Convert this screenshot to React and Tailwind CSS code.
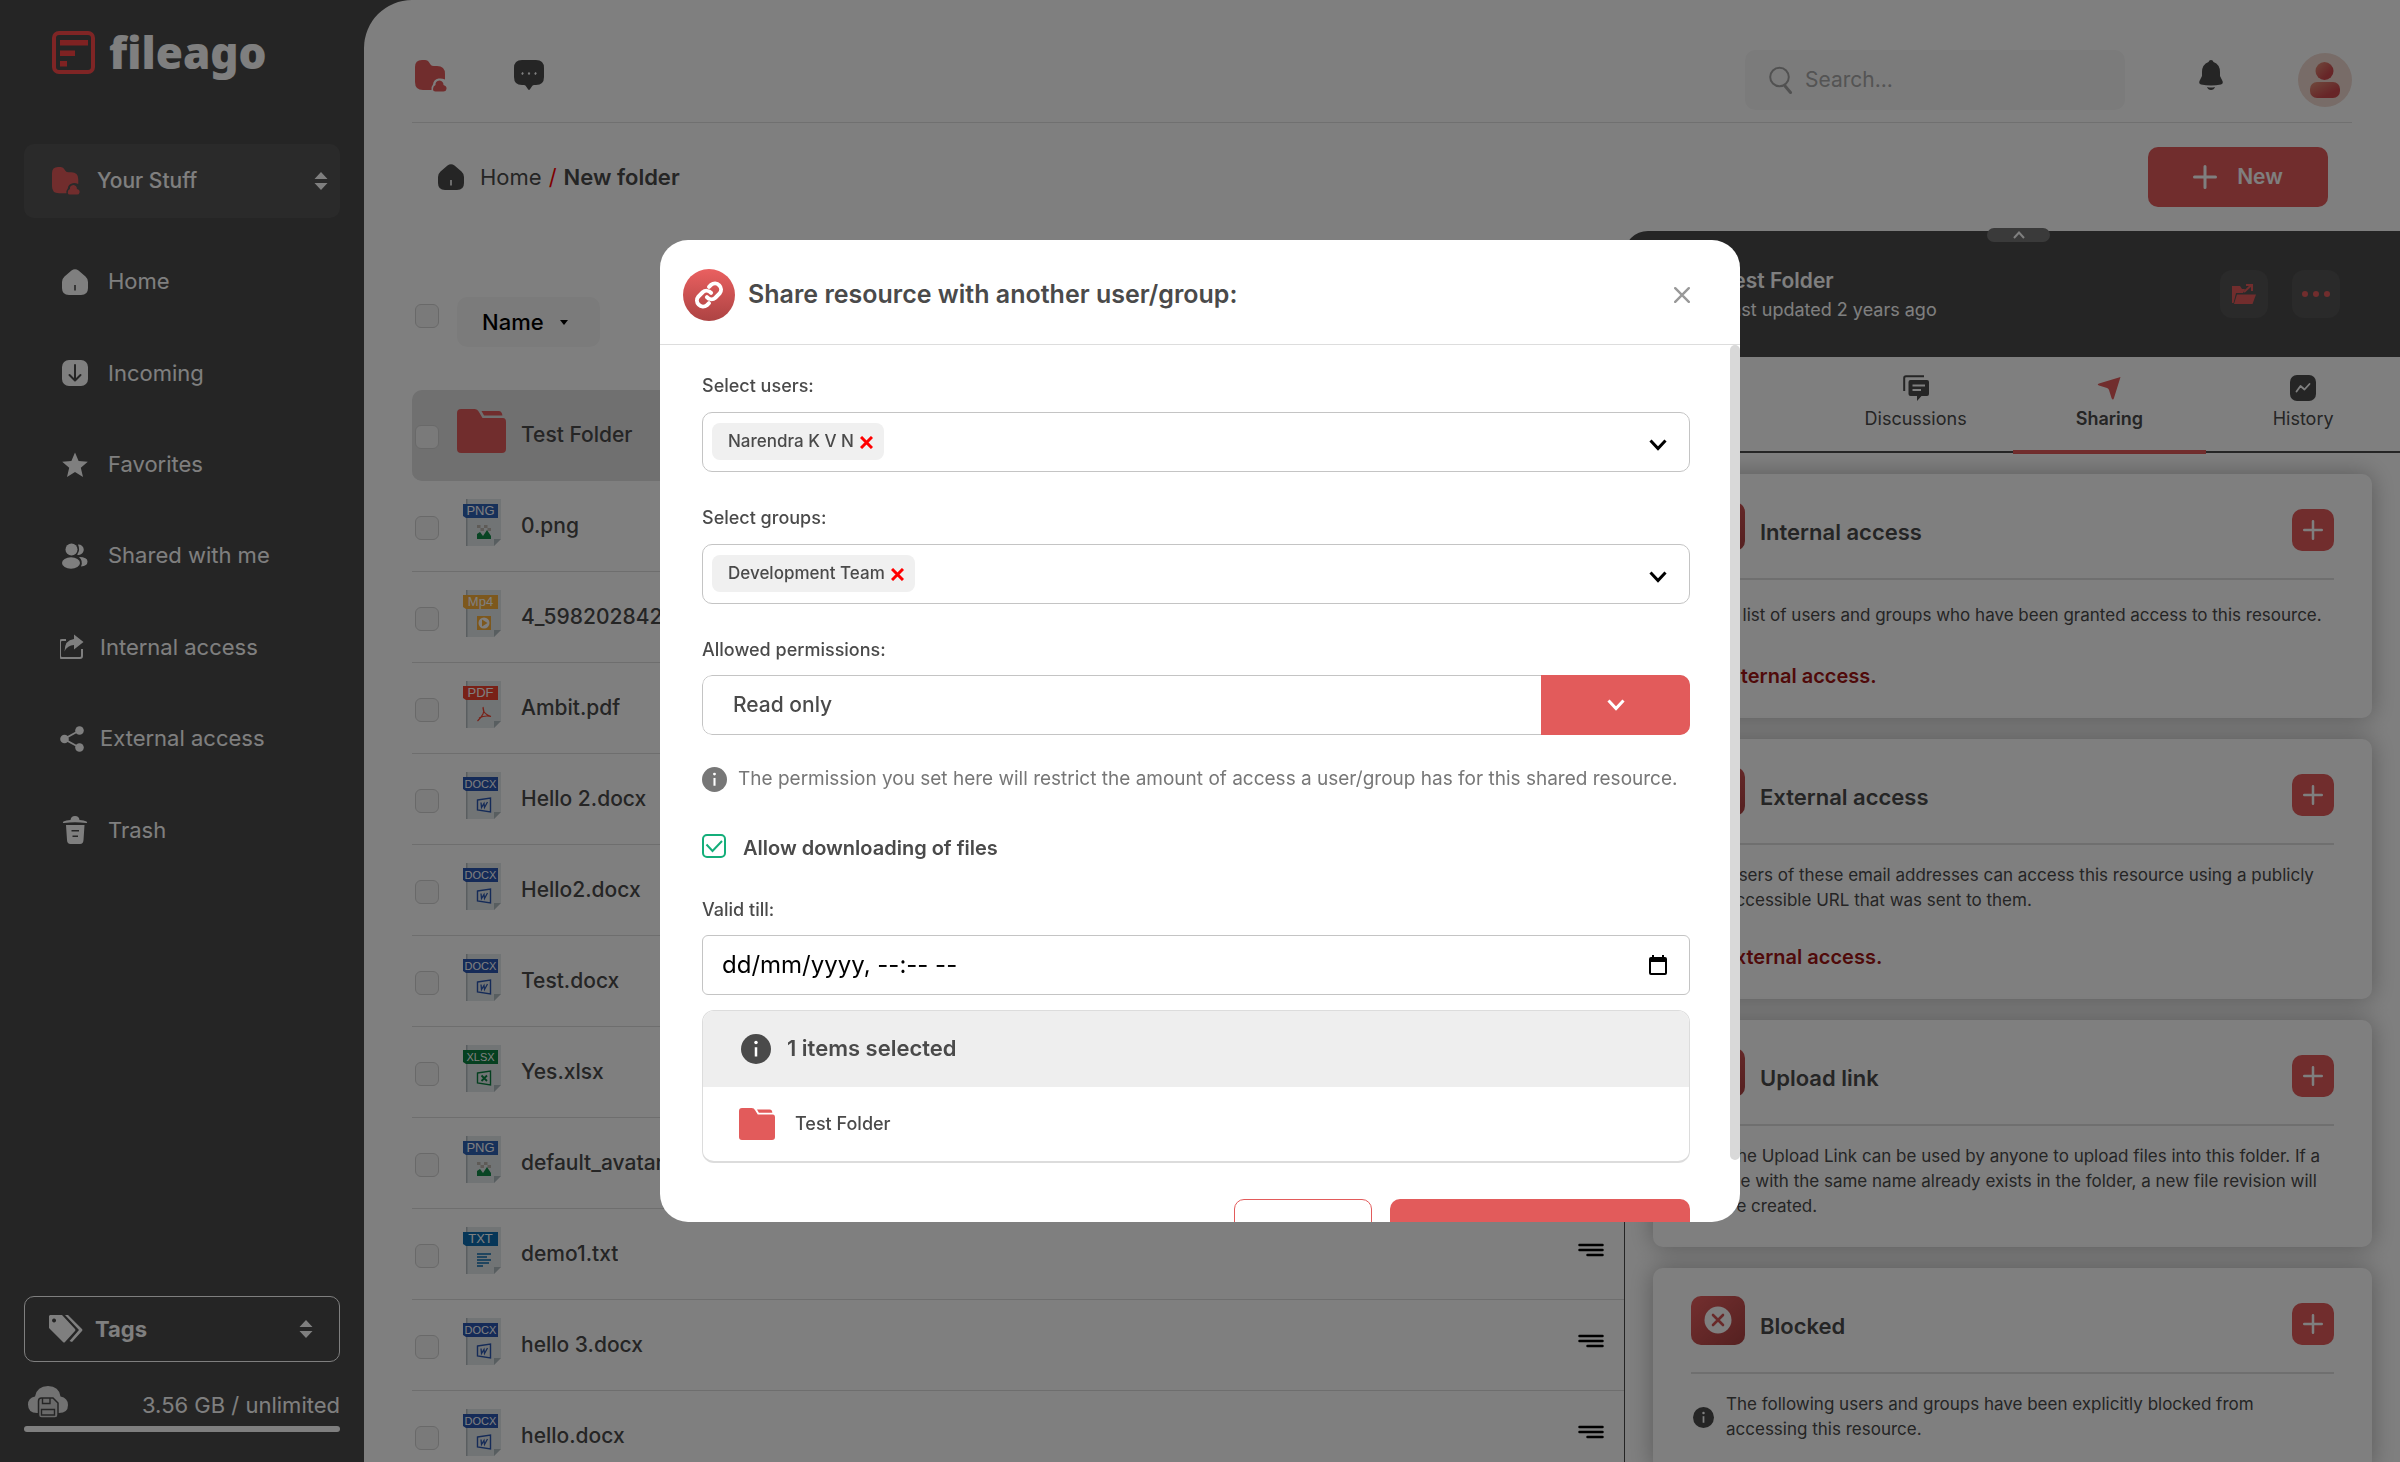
const navItems = [
  { label: "Home", icon: HomeIcon },
  { label: "Incoming", icon: IncomingIcon },
  { label: "Favorites", icon: StarIcon },
  { label: "Shared with me", icon: PeopleIcon },
  { label: "Internal access", icon: ShareBoxIcon, tight: true },
  { label: "External access", icon: ShareNodesIcon, tight: true },
  { label: "Trash", icon: TrashIcon },
];

const files = [
  { name: "Test Folder", type: "folder" },
  { name: "0.png", type: "PNG" },
  { name: "4_5982028420", type: "Mp4" },
  { name: "Ambit.pdf", type: "PDF" },
  { name: "Hello 2.docx", type: "DOCX" },
  { name: "Hello2.docx", type: "DOCX" },
  { name: "Test.docx", type: "DOCX" },
  { name: "Yes.xlsx", type: "XLSX" },
  { name: "default_avatar.png", type: "PNG" },
  { name: "demo1.txt", type: "TXT" },
  { name: "hello 3.docx", type: "DOCX" },
  { name: "hello.docx", type: "DOCX" },
];

const cards = [
  {
    title: "Internal access",
    note: "A list of users and groups who have been granted access to this resource.",
    status: "No internal access.",
  },
  {
    title: "External access",
    note: "Users of these email addresses can access this resource using a publicly accessible URL that was sent to them.",
    status: "No external access.",
  },
  {
    title: "Upload link",
    note: "The Upload Link can be used by anyone to upload files into this folder. If a file with the same name already exists in the folder, a new file revision will be created.",
  },
  {
    title: "Blocked",
    note: "The following users and groups have been explicitly blocked from accessing this resource.",
  },
];

/* ---------- Icons ---------- */

function HomeIcon({ className = "size-[26px]" }) {
  return (
    <svg viewBox="0 0 26 26" className={className} fill="currentColor">
      <path fillRule="evenodd" d="M9.5 1.6Q13-1.2 16.500 1.600L23.500 7.500Q26 9.800 26 13V19Q26 26 19 26H7Q0 26 0 19V13Q0 9.800 2.500 7.500ZM12.200 16V21.500H13.800V16Z" />
    </svg>
  );
}

function IncomingIcon() {
  return (
    <svg viewBox="0 0 26 26" className="size-[26px]" fill="none">
      <rect width="26" height="26" rx="7" fill="currentColor" />
      <path d="M13 5V20M7.500 15L13 20.500L18.500 15" stroke="#4a4a4a" strokeWidth="2" strokeLinecap="round" strokeLinejoin="round" />
    </svg>
  );
}

function StarIcon() {
  return (
    <svg viewBox="0 0 26 26" className="size-[26px]" fill="currentColor">
      <path d="M13 .5L16.600 8.900L25.800 9.700L18.800 15.700L21 25L13 20L5 25L7.200 15.700L.2 9.700L9.400 8.900Z" />
    </svg>
  );
}

function PeopleIcon() {
  return (
    <svg viewBox="0 0 26 26" className="size-[26px]" fill="currentColor">
      <circle cx="9.500" cy="6.500" r="6" />
      <ellipse cx="9" cy="20" rx="9" ry="5.800" />
      <path d="M16 1.500A5 5 0 0 1 17 12Q16 12.300 15.200 11.500Q18.500 7 16 1.500Z" />
      <path d="M17 14Q25.500 14 25.500 18.500Q25.500 23 19 23.500Q21.500 18 17 14Z" />
    </svg>
  );
}

function ShareBoxIcon() {
  return (
    <svg viewBox="2 0 26 26" className="size-[26px]" fill="none">
      <path d="M8 6H4Q2 6 2 8V22Q2 24 4 24H22Q24 24 24 22V15" stroke="currentColor" strokeWidth="2" />
      <path d="M16 .5L25.500 8L16 15.500V11Q9.500 11 6.500 17.500Q6.500 6 16 5Z" fill="currentColor" />
    </svg>
  );
}

function ShareNodesIcon() {
  return (
    <svg viewBox="1 0 26 26" className="size-[26px]" fill="currentColor">
      <path d="M20.500 4.500L5 13L20.500 21.500" fill="none" stroke="currentColor" strokeWidth="1.800" />
      <circle cx="5.500" cy="13" r="4.300" />
      <circle cx="20.500" cy="4.500" r="4.300" />
      <circle cx="20.500" cy="21.500" r="4.300" />
    </svg>
  );
}

function TrashIcon() {
  return (
    <svg viewBox="0 0 26 28" className="h-7 w-[26px]" fill="currentColor">
      <path d="M8.500 4Q9 0 13 0Q17 0 17.500 4Q22 4 24.500 5.500Q26 7 24 7Q13 5.500 2 7Q0 7 1.500 5.500Q4 4 8.500 4Z" />
      <path fillRule="evenodd" d="M4 9H22.500L21.500 24Q21.300 28 18 28H8.500Q5.200 28 5 24ZM9.500 14V15.500H17V14ZM10.500 19.500V21H16V19.500Z" />
    </svg>
  );
}

function FolderUserIcon({ className }) {
  return (
    <svg viewBox="0 0 32 32" className={className} fill="#e25b5b">
      <path d="M0 7Q0 0 7 0H10Q13 0 14.500 3L15.500 4.500Q16.500 6 19 6H22Q30 6 30 14V19.500Q27 18 23.500 18.500Q18.500 19.500 18 24.500Q15.800 27 16.500 30H8Q0 30 0 22Z" />
      <path d="M20.500 25Q20 21 24.500 20.500Q28.500 21 28.500 25Q32 26 31.500 29Q31 31.500 28.500 31.500H20.500Q18 31.500 18 29Q18 26 20.500 25Z" />
    </svg>
  );
}

function FolderIcon({ className }) {
  return (
    <svg viewBox="0 0 48 44" className={className} fill="#e25b5b" preserveAspectRatio="none">
      <path d="M0 4Q0 0 4 0H17Q20 0 21.500 3L25 9H45Q48 9 48 13V40Q48 44 44 44H4Q0 44 0 40Z" />
      <path d="M24 2H41Q44 2 44.500 6.500H26.500Z" />
    </svg>
  );
}

function SortArrows() {
  return (
    <svg viewBox="0 0 14 18" className="h-[18px] w-3.5" fill="currentColor">
      <path d="M7 0L13.500 7H.5ZM7 18L13.500 11H.5Z" />
    </svg>
  );
}

function PlusIcon({ className }) {
  return (
    <svg viewBox="0 0 24 24" className={className} fill="none" stroke="currentColor" strokeWidth="3" strokeLinecap="round">
      <path d="M12 1.500V22.500M1.500 12H22.500" />
    </svg>
  );
}

function InfoIcon({ className }) {
  return (
    <svg viewBox="0 0 24 24" className={className} fill="none">
      <circle cx="12" cy="12" r="12" fill="currentColor" />
      <circle cx="12" cy="6.800" r="1.400" fill="#fff" />
      <path d="M12 10.500V18" stroke="#fff" strokeWidth="2" />
    </svg>
  );
}

function ChevronDown() {
  return (
    <svg viewBox="0 0 18 12" className="h-3 w-[18px]" fill="none" stroke="currentColor" strokeWidth="3">
      <path d="M1.500 1.500L9 9.500L16.500 1.500" />
    </svg>
  );
}

const badgeColors = {
  PNG: "#2f62b4",
  Mp4: "#fbb03b",
  PDF: "#f2432f",
  DOCX: "#2a56b0",
  XLSX: "#0a8040",
  TXT: "#0d6cb0",
};

function FileIcon({ type }) {
  const color = badgeColors[type];
  return (
    <svg viewBox="0 0 38 47" className="h-[47px] w-[38px]">
      <path d="M3 0H38V40L31 47H3Z" fill="#e3e8eb" />
      <path d="M3 0H4.500V47H3Z" fill="#b4bdc1" />
      <path d="M38 40H31V47Z" fill="#b0bcc1" />
      <path d="M0 5H35V19H3L0 17Z" fill={color} />
      <text
        x="17.500"
        y="16"
        textAnchor="middle"
        fontSize={type.length > 3 ? 11 : 13}
        fill="#fff"
        fontFamily="Liberation Sans, sans-serif"
      >
        {type}
      </text>
      {type === "PNG" && (
        <>
          <path d="M14 26h3.500v3H14zM21 26h3.500v3H21zM17.500 29H21v3h-3.500zM24.500 29H28v3h-3.500z" fill="#bcb6ae" />
          <path d="M14 40V35L17 33L20 37L24 31L28 37V40Z" fill="#128a48" />
        </>
      )}
      {type === "Mp4" && (
        <>
          <rect x="14" y="26" width="14" height="14" fill={color} />
          <circle cx="21" cy="33" r="5.500" fill="#fff" />
          <path d="M19 29.500L24.500 33L19 36.500Z" fill={color} />
        </>
      )}
      {type === "PDF" && (
        <path d="M20 26Q21.500 30 20 33T14.500 40M20 27Q20 33 28 35.500Q22 34 16 37" fill="none" stroke={color} strokeWidth="1.200" />
      )}
      {(type === "DOCX" || type === "XLSX") && (
        <>
          <path d="M14.500 28L27.500 26V40L14.500 38Z" fill="none" stroke={color} strokeWidth="1.400" />
          {type === "DOCX" ? (
            <path d="M18 30.500L18.500 35.500L21 31.500L21.500 35.500L24.500 30" fill="none" stroke={color} strokeWidth="1.300" />
          ) : (
            <path d="M18.500 30.500L24 36M24 30.500L18.500 36" fill="none" stroke={color} strokeWidth="1.800" />
          )}
        </>
      )}
      {type === "TXT" && (
        <path d="M14 27H28M14 30H24M14 33H28M14 36H26M14 39H20" stroke={color} strokeWidth="1.400" />
      )}
    </svg>
  );
}

/* ---------- Sidebar ---------- */

function Sidebar() {
  return (
    <aside className="flex w-[364px] shrink-0 flex-col px-6 pb-[30px] text-white">
      <a href="#" className="flex items-center gap-3.5 pt-6 pl-7">
        <svg viewBox="0 0 43 43" className="size-[43px]" fill="#ff4545">
          <rect x="2" y="2" width="39" height="39" rx="5" fill="none" stroke="#ff4b4b" strokeWidth="4" />
          <path d="M8 9H36V14.500H8ZM8 19.500H23V25H8ZM8 30H15V35.500H8Z" />
        </svg>
        <span className="font-['Noto_Sans',sans-serif] text-[44px] leading-[56px] font-black">fileago</span>
      </a>

      <button className="mt-16 flex h-[74px] w-full items-center rounded-[10px] bg-[#545454] pr-3 pl-7">
        <FolderUserIcon className="size-7" />
        <span className="ml-[17px] text-[21px] font-medium">Your Stuff</span>
        <span className="ml-auto">
          <SortArrows />
        </span>
      </button>

      <nav className="mt-[18px] grid h-[640px] grid-rows-7 items-center">
        {navItems.map(({ label, icon: Icon, tight }) => (
          <a
            key={label}
            href="#"
            className={tight ? "flex items-center gap-3.5 pl-9 text-[22px]" : "flex items-center gap-5 pl-[38px] text-[22px]"}
          >
            <Icon />
            {label}
          </a>
        ))}
      </nav>

      <button className="mt-auto flex h-[66px] w-full items-center rounded-[10px] border border-white pr-[26px] pl-6">
        <svg viewBox="0 0 34 28" className="h-7 w-[34px]" fill="currentColor">
          <path fillRule="evenodd" d="M1 0H13L26 14Q27 15 26 16L16 27Q15 28 14 27L0 13V1ZM5 3.500A2 2 0 1 0 5.100 3.500Z" />
          <path d="M16 0H19L33 14Q34 15 33 16L23 27L20.500 26L30 15Z" />
        </svg>
        <span className="ml-3 text-[22px] font-bold">Tags</span>
        <span className="ml-auto">
          <SortArrows />
        </span>
      </button>

      <div className="mt-6 flex items-center justify-between pl-1">
        <svg viewBox="0 0 40 33" className="h-[33px] w-10">
          <path d="M9 27Q0 27 0 18.500Q0 12 7 10.500Q9 0 20 0Q31 0 32.500 10.500Q40 12 40 19Q40 27 31 27Z" fill="#fff" fillOpacity=".85" />
          <path d="M10.500 15Q10.500 12 13.500 12H25L30 17V29Q30 32 27 32H13.500Q10.500 32 10.500 29Z" fill="#d4d4d4" stroke="#4a4a4a" strokeWidth="1.500" />
          <path d="M14.500 12V17.500H22V12M13.500 23.500H26.500V29H13.500Z" fill="none" stroke="#4a4a4a" strokeWidth="1.400" />
        </svg>
        <span className="pt-1 text-[22px] leading-6">3.56 GB / unlimited</span>
      </div>
      <div className="mt-[7px] h-1.5 rounded-full bg-white" />
    </aside>
  );
}

/* ---------- Top bar ---------- */

function TopBar() {
  return (
    <header className="mr-12 ml-12 flex h-[123px] items-start border-b border-[#e0e0e0]">
      <a href="#" aria-label="Files" className="mt-[60px] ml-[3px]">
        <FolderUserIcon className="size-8" />
      </a>
      <a href="#" aria-label="Chat" className="mt-[60px] ml-[67px] text-[#4a4a4a]">
        <svg viewBox="0 0 30 30" className="size-[30px]" fill="currentColor">
          <path d="M8 0H22Q30 0 30 8V17Q30 25 22 25H20Q18.500 25 17.500 27L16 29.300Q15 30.500 14 29.300L12.500 27Q11.500 25 10 25H8Q0 25 0 17V8Q0 0 8 0Z" />
          <path d="M8 14.500L9 12.500M14.500 14.500L15.500 12.500M21 14.500L22 12.500" stroke="#fff" strokeWidth="1.800" />
        </svg>
      </a>

      <label className="mt-[50px] ml-auto flex h-[60px] w-[380px] items-center gap-3 rounded-[10px] bg-[#f7f7f7] px-6">
        <svg viewBox="0 0 24 28" className="h-7 w-6 shrink-0" fill="none" stroke="#a3a3a3" strokeWidth="2" strokeLinecap="round">
          <circle cx="10.500" cy="11" r="9.300" />
          <path d="M16 20L21.500 26.500" strokeWidth="3" />
        </svg>
        <input
          type="search"
          aria-label="Search"
          placeholder="Search..."
          className="w-full bg-transparent text-[21px] outline-none placeholder:text-[#a8a8a8]"
        />
      </label>
      <button aria-label="Notifications" className="mt-[60px] ml-[74px] text-[#4a4a4a]">
        <svg viewBox="0 0 24 30" className="h-[30px] w-6" fill="currentColor">
          <path d="M12 0Q14 0 14.500 2Q21 4.500 21 12V16L23.500 21Q24.500 24 22 24.500Q12 26.500 2 24.500Q-.5 24 .5 21L3 16V12Q3 4.500 9.500 2Q10 0 12 0Z" />
          <path d="M8 27Q12 28 16 27Q15 30 12 30Q9 30 8 27Z" />
        </svg>
      </button>
      <button aria-label="Account" className="mt-[53px] ml-[75px]">
        <svg viewBox="0 0 54 54" className="size-[54px]">
          <defs>
            <linearGradient id="avatar" x1="0" y1="0" x2=".7" y2=".7">
              <stop offset="0" stopColor="#e0937a" />
              <stop offset="1" stopColor="#cf4a4f" />
            </linearGradient>
          </defs>
          <circle cx="27" cy="27" r="27" fill="#f0d9d0" />
          <circle cx="26.500" cy="18" r="9" fill="url(#avatar)" />
          <rect x="12" y="29" width="30" height="16" rx="7" fill="url(#avatar)" />
        </svg>
      </button>
    </header>
  );
}

/* ---------- File list ---------- */

function Checkbox({ label }) {
  return (
    <input
      type="checkbox"
      aria-label={label}
      className="size-6 shrink-0 appearance-none rounded-[6px] border border-[#d2d2d2] bg-[#f5f5f5]"
    />
  );
}

function FileList() {
  return (
    <div className="min-w-0 flex-1 pl-12">
      <div className="flex items-center gap-[18px] pt-[66px] pb-[43px] pl-[3px]">
        <span className="flex pb-3">
          <Checkbox label="Select all" />
        </span>
        <button className="flex h-[50px] items-center gap-4 rounded-[10px] bg-[#f7f7f7] pr-8 pl-[25px] text-[22px] font-medium text-black">
          Name
          <svg viewBox="0 0 8 5" className="h-[5px] w-2" fill="currentColor">
            <path d="M0 0H8L4 5Z" />
          </svg>
        </button>
      </div>

      <ul>
        {files.map((file) => (
          <li
            key={file.name}
            className={
              file.type === "folder"
                ? "flex h-[91px] items-center rounded-[10px] border-b border-[#e0e0e0] bg-[#e0e0e0] pr-5 pl-[3px]"
                : "flex h-[91px] items-center border-b border-[#dcdcdc] pr-5 pl-[3px]"
            }
          >
            <span className="flex pt-[3px]">
              <Checkbox label={`Select ${file.name}`} />
            </span>
            <span className="ml-[18px] flex w-[64px] shrink-0 pb-2">
              {file.type === "folder" ? (
                <FolderIcon className="h-[44px] w-[49px]" />
              ) : (
                <span className="pl-1.5">
                  <FileIcon type={file.type} />
                </span>
              )}
            </span>
            <a href="#" className="truncate text-[21px] font-medium">
              {file.name}
            </a>
            <button aria-label={`Options for ${file.name}`} className="ml-auto pb-2 text-black">
              <svg viewBox="0 0 26 14" className="h-3.5 w-[26px]" stroke="currentColor" strokeWidth="2.500" strokeLinecap="round">
                <path d="M1.500 2H24.500M1.500 7H24.500M9.500 12H24.500" />
              </svg>
            </button>
          </li>
        ))}
      </ul>
    </div>
  );
}

/* ---------- Details panel ---------- */

function AccessCard({ title, note, status }) {
  return (
    <section className="rounded-[10px] bg-white px-[38px] pb-7 shadow-[0_0_24px_rgba(0,0,0,0.3)]">
      <div className="flex h-[106px] items-center border-b-2 border-[#dfdfdf]">
        <span className="flex h-[49px] w-[54px] items-center justify-center rounded-[10px] bg-linear-to-br from-[#e85f5f] to-[#a94141]">
          <svg viewBox="0 0 28 28" className="size-7" fill="none">
            <circle cx="14" cy="14" r="13.500" fill="#fff" />
            <path d="M9 9L19 19M19 9L9 19" stroke="#d25252" strokeWidth="2.600" strokeLinecap="round" />
          </svg>
        </span>
        <h3 className="mt-3 ml-[15px] text-[22px] font-semibold">{title}</h3>
        <button
          aria-label={`Add ${title}`}
          className="mt-2 ml-auto flex size-[42px] items-center justify-center rounded-[10px] bg-[#e25b5b] text-white"
        >
          <PlusIcon className="size-5" />
        </button>
      </div>
      <div className="mt-[18px] flex min-h-[34px] items-center gap-3">
        <InfoIcon className="ml-0.5 size-[21px] shrink-0" />
        <p className="text-[17px] leading-[25px]">{note}</p>
      </div>
      {status && <p className="mt-[30px] text-[20px] leading-7 font-semibold text-[#a01414]">{status}</p>}
    </section>
  );
}

function DetailsPanel() {
  return (
    <div className="flex w-[776px] shrink-0 flex-col">
      <div className="relative flex h-[126px] shrink-0 items-center rounded-tl-[24px] bg-[#4a4a4a] pr-[60px] pl-7 text-white">
        <button
          aria-label="Collapse header"
          className="absolute -top-[3px] left-[363px] flex h-3.5 w-[63px] items-center justify-center rounded-[7px] bg-[#757575]"
        >
          <svg viewBox="0 0 12 8" className="h-2 w-3" fill="none" stroke="currentColor" strokeWidth="2">
            <path d="M1 7L6 1.500L11 7" />
          </svg>
        </button>
        <FolderIcon className="h-[44px] w-[49px]" />
        <div className="ml-5">
          <h2 className="text-[21px] leading-8 font-semibold">Test Folder</h2>
          <p className="text-[18px] leading-[26px]">Last updated 2 years ago</p>
        </div>
        <button aria-label="Open folder" className="ml-auto flex size-12 items-center justify-center rounded-[12px] bg-[#545454]">
          <svg viewBox="0 0 24 20" className="h-5 w-6" fill="#e25b5b">
            <path d="M0 2H8L10 5H13L11 9H4L1.500 19H0Z" />
            <path d="M5 10.500H24L20.500 20H2Z" />
            <path d="M12 8L19 1.500M14 1H20V7" fill="none" stroke="#e25b5b" strokeWidth="2" />
          </svg>
        </button>
        <button aria-label="More" className="ml-6 flex size-12 items-center justify-center rounded-[12px] bg-[#545454]">
          <svg viewBox="0 0 28 6" className="h-1.5 w-7" fill="#e25b5b">
            <circle cx="3" cy="3" r="3" />
            <circle cx="14" cy="3" r="3" />
            <circle cx="25" cy="3" r="3" />
          </svg>
        </button>
      </div>

      <div className="grid h-24 shrink-0 grid-cols-4 border-b-2 border-l border-[#4a4a4a] text-[18px] leading-6">
        <button className="flex flex-col items-center gap-1.5 pt-[18px]">
          <InfoIcon className="size-[26px]" />
          Info
        </button>
        <button className="flex flex-col items-center gap-1.5 pt-[18px]">
          <svg viewBox="0 0 26 26" className="size-[26px]" fill="none">
            <path d="M1.200 16V3Q1.200 1.200 3 1.200H21" stroke="currentColor" strokeWidth="2" />
            <path d="M7.500 5H24Q26 5 26 7V19Q26 21 24 21H18.500L14 26V21H7.500Q5.500 21 5.500 19V7Q5.500 5 7.500 5Z" fill="currentColor" />
            <path d="M9.500 10.500H22M9.500 15H18" stroke="#fff" strokeWidth="1.800" />
          </svg>
          Discussions
        </button>
        <button className="-mb-[3px] flex flex-col items-center gap-1.5 border-b-4 border-[#e25b5b] pt-[18px] font-semibold">
          <svg viewBox="0 0 26 26" className="size-[26px]" fill="#e25b5b">
            <path d="M24.500 2L18 23Q17 26 15.500 23L13 15Q12.500 13.500 11 13L3 10.500Q.5 9.500 3 8.500Z" />
          </svg>
          Sharing
        </button>
        <button className="flex flex-col items-center gap-1.5 pt-[18px]">
          <svg viewBox="0 0 26 26" className="size-[26px]" fill="none">
            <rect width="26" height="26" rx="7" fill="currentColor" />
            <path d="M6.500 16.500L10.500 11L14.500 14.500L19.500 9" stroke="#fff" strokeWidth="1.800" strokeLinecap="round" strokeLinejoin="round" />
          </svg>
          History
        </button>
      </div>

      <div className="flex min-h-0 flex-1 flex-col gap-[21px] overflow-hidden border-l border-[#4a4a4a] pt-[21px] pr-7 pl-7">
        {cards.map((card) => (
          <AccessCard key={card.title} {...card} />
        ))}
      </div>
    </div>
  );
}

/* ---------- Share dialog ---------- */

function MultiSelect({ id, label, values }) {
  return (
    <div className="mb-[34px]">
      <label htmlFor={id} className="block text-[18px] leading-6 font-medium">
        {label}
      </label>
      <div className="mt-3.5 flex h-[60px] items-center rounded-[10px] border border-[#c4c4c4] pr-[22px] pl-[9px]">
        {values.map((value) => (
          <span key={value} className="flex h-[37px] shrink-0 items-center gap-1.5 rounded-[8px] bg-[#f0f0f0] pr-[11px] pl-4 text-[17px] font-medium">
            {value}
            <button aria-label={`Remove ${value}`} className="pt-0.5">
              <svg viewBox="0 0 13 13" className="size-[13px]" stroke="#f00" strokeWidth="3">
                <path d="M1 1L12 12M12 1L1 12" />
              </svg>
            </button>
          </span>
        ))}
        <input id={id} type="text" className="min-w-0 flex-1 bg-transparent px-2 outline-none" />
        <button aria-label={`Open ${label}`} className="pt-1.5 text-black">
          <ChevronDown />
        </button>
      </div>
    </div>
  );
}

function ShareDialog() {
  return (
    <div className="fixed inset-0 flex items-center justify-center bg-black/50">
      <div role="dialog" aria-labelledby="share-title" className="relative flex h-[67.2vh] w-[45%] flex-col overflow-hidden rounded-[28px] bg-white">
        <div className="flex h-[105px] shrink-0 items-center border-b border-[#ddd] pt-1.5 pr-[50px] pl-[23px]">
          <span className="flex size-[52px] items-center justify-center rounded-full bg-linear-to-b from-[#ea6060] to-[#ad4343]">
            <svg viewBox="0 0 24 24" className="size-[34px]" fill="none" stroke="#fff" strokeWidth="2.800" strokeLinecap="round">
              <path d="M10.500 13.500a4.300 4.300 0 0 0 6 .4l3-3a4.300 4.300 0 0 0-6-6.100l-1.500 1.500" />
              <path d="M13.500 10.500a4.300 4.300 0 0 0-6-.4l-3 3a4.300 4.300 0 0 0 6 6.100l1.500-1.500" />
            </svg>
          </span>
          <h1 id="share-title" className="ml-[13px] text-[25px] font-semibold">
            Share resource with another user/group:
          </h1>
          <button aria-label="Close" className="ml-auto text-[#999]">
            <svg viewBox="0 0 16 16" className="size-4" stroke="currentColor" strokeWidth="2.400" strokeLinecap="round">
              <path d="M1.200 1.200L14.800 14.800M14.800 1.200L1.200 14.800" />
            </svg>
          </button>
        </div>

        <div className="min-h-0 flex-1 overflow-hidden pt-[29px] pr-[50px] pl-[42px]">
          <MultiSelect id="users" label="Select users:" values={["Narendra K V N"]} />
          <MultiSelect id="groups" label="Select groups:" values={["Development Team"]} />

          <label htmlFor="permissions" className="block text-[18px] leading-6 font-medium">
            Allowed permissions:
          </label>
          <div className="relative mt-[13px] h-[60px] overflow-hidden rounded-[10px]">
            <select
              id="permissions"
              className="h-full w-full appearance-none rounded-[10px] border border-[#c4c4c4] pl-[30px] text-[21px] font-medium"
            >
              <option>Read only</option>
            </select>
            <span className="pointer-events-none absolute inset-y-0 right-0 flex w-[149px] items-center justify-center bg-[#e25b5b] text-white">
              <ChevronDown />
            </span>
          </div>

          <p className="mt-8 flex items-center gap-[11px] text-[19px] leading-6 text-[#777]">
            <InfoIcon className="size-[25px] shrink-0" />
            The permission you set here will restrict the amount of access a user/group has for this shared resource.
          </p>

          <div className="mt-[42px] flex items-center gap-[17px]">
            <span className="relative -mt-1 flex size-6">
              <input id="downloads" type="checkbox" defaultChecked className="size-6 appearance-none rounded-[5px] border-2 border-[#14ae7a]" />
              <svg viewBox="0 0 24 24" className="pointer-events-none absolute inset-0 size-6" fill="none" stroke="#14ae7a" strokeWidth="2">
                <path d="M4.500 10.500L10.500 17L20 7" />
              </svg>
            </span>
            <label htmlFor="downloads" className="text-[20px] leading-7 font-semibold">
              Allow downloading of files
            </label>
          </div>

          <label htmlFor="valid-till" className="mt-9 block text-[18px] leading-6 font-medium">
            Valid till:
          </label>
          <div className="mt-[13px] flex h-[60px] items-center rounded-[6px] border border-[#c4c4c4] pr-[22px] pl-[19px] text-black">
            <input
              id="valid-till"
              type="text"
              placeholder="dd/mm/yyyy, --:-- --"
              className="min-w-0 flex-1 text-[24px] outline-none placeholder:text-black"
            />
            <button aria-label="Pick a date">
              <svg viewBox="0 0 18 20" className="h-5 w-[18px]" fill="currentColor">
                <path fillRule="evenodd" d="M3 0H5V2H13V0H15V2H16Q18 2 18 4V18Q18 20 16 20H2Q0 20 0 18V4Q0 2 2 2H3ZM2 7V18H16V7Z" />
              </svg>
            </button>
          </div>

          <section className="mt-[15px] overflow-hidden rounded-[12px] border border-b-2 border-[#dcdcdc]">
            <h2 className="flex h-[76px] items-center gap-4 bg-[#eee] pl-[38px] text-[22px] font-semibold">
              <InfoIcon className="size-[30px]" />
              1 items selected
            </h2>
            <div className="flex h-[74px] items-center gap-5 pl-9 text-[18px] font-medium">
              <FolderIcon className="h-8 w-9" />
              Test Folder
            </div>
          </section>

          <div className="mt-9 flex justify-end gap-[18px] pb-9 text-[18px] font-medium">
            <button className="h-16 w-[138px] rounded-[10px] border border-[#e25b5b] text-[#e25b5b]">Cancel</button>
            <button className="h-16 w-[300px] rounded-[10px] bg-[#e25b5b] text-white">Create new share</button>
          </div>
        </div>

        {/* scroll thumb, sits over the right edge of the body */}
        <div className="absolute top-[105px] right-0 h-[83%] w-2.5 rounded-full bg-[#d9d9d9]" />
      </div>
    </div>
  );
}

export default function App() {
  return (
    <div className="flex h-screen overflow-hidden bg-[#4a4a4a] font-['Inter','Noto_Sans',sans-serif] text-[#4a4a4a]">
      <Sidebar />

      <main className="flex min-w-0 flex-1 flex-col rounded-tl-[48px] bg-white">
        <TopBar />

        <div className="flex h-[108px] shrink-0 items-center pr-[72px] pl-[74px]">
          <HomeIcon />
          <nav className="ml-4 flex gap-[7px] text-[22px]">
            <a href="#">Home</a>
            <span className="text-[#f00]">/</span>
            <span className="font-semibold">New folder</span>
          </nav>
          <button className="ml-auto flex h-[60px] w-[180px] items-center justify-center gap-5 rounded-[10px] bg-[#e25b5b] text-[21px] font-semibold text-white">
            <PlusIcon className="size-6" />
            New
          </button>
        </div>

        <div className="flex min-h-0 flex-1">
          <FileList />
          <DetailsPanel />
        </div>
      </main>

      <ShareDialog />
    </div>
  );
}
